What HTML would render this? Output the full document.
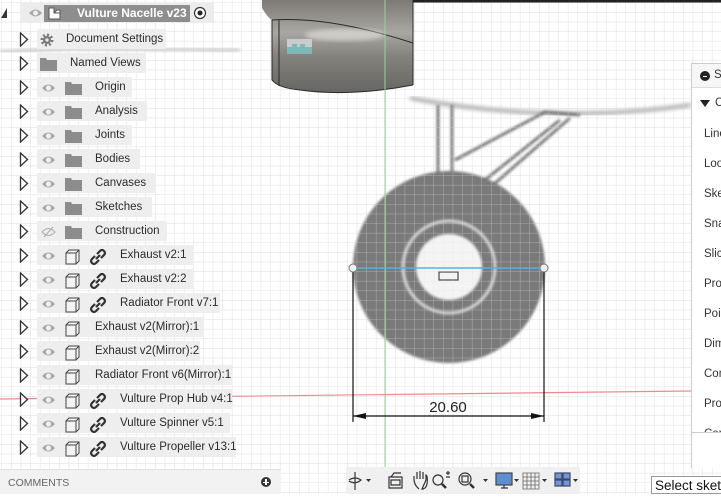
<!DOCTYPE html>
<html><head><meta charset="utf-8"><style>
*{margin:0;padding:0;box-sizing:border-box}
body{width:721px;height:494px;overflow:hidden;position:relative;font-family:"Liberation Sans",sans-serif;background:#fff}
#bg{position:absolute;left:0;top:0}
.row{position:absolute;left:0;height:24px;width:300px}
.tri{position:absolute;left:19px;top:6px}
.box{position:absolute;left:37px;top:3px;height:20px;background:#eeeeee}
.t{position:absolute;top:7px;font-size:11.5px;color:#2b2b2b;white-space:nowrap}
.ic{position:absolute;top:5px}
</style></head><body>
<svg id="bg" width="721" height="494" viewBox="0 0 721 494">
<defs>
<pattern id="g" width="9.6" height="9.6" patternUnits="userSpaceOnUse" x="2" y="3">
<path d="M9.6 0V9.6H0" fill="none" stroke="#e2e2e2" stroke-width="1"/>
</pattern>
<filter id="bl"><feGaussianBlur stdDeviation="1.3"/></filter>
<filter id="bl2"><feGaussianBlur stdDeviation="2"/></filter>
<linearGradient id="ng" x1="0" y1="0" x2="0" y2="1"><stop offset="0" stop-color="#7d7a75"/><stop offset="0.35" stop-color="#a9a7a2"/><stop offset="0.6" stop-color="#85837e"/><stop offset="1" stop-color="#686662"/></linearGradient>
</defs>
<rect width="721" height="494" fill="url(#g)"/>
<path d="M0 52 L80 48 L240 50" stroke="#777" stroke-width="3" fill="none" filter="url(#bl2)" opacity="0.5"/>
<path d="M410 98 Q 550 125 691 105" stroke="#666" stroke-width="3" fill="none" filter="url(#bl2)" opacity="0.7"/>
<g filter="url(#bl)" stroke="#777" fill="none" stroke-width="3">
<path d="M438 105 L438 260"/><path d="M452 105 L452 260"/>
<path d="M455 160 L545 112 L580 115"/><path d="M460 200 L560 120"/><path d="M470 205 L570 118"/>
</g>
<circle cx="449" cy="267" r="96" fill="#7a7a7a" filter="url(#bl)"/>
<circle cx="449" cy="267" r="46" fill="none" stroke="#d8d8d8" stroke-width="3" filter="url(#bl)"/>
<circle cx="449" cy="267" r="33" fill="#f4f4f4" filter="url(#bl)"/>
<path d="M448 200 L448 260" stroke="#bbb" stroke-width="6" filter="url(#bl)"/>
<rect x="439" y="272" width="19" height="8" fill="none" stroke="#555" stroke-width="1.3"/>
<rect width="721" height="494" fill="url(#g)" opacity="0.5"/>
<path d="M240 0 L262 0 L262 8 Q268 18 272 20 L272 80 Q278 88 300 90 Q350 97 413 85 L413 0 Z" fill="url(#ng)"/>
<path d="M272 20 L272 80 Q278 88 300 90 Q350 97 413 85 M279 20 L279 86 M272 20 Q330 16 413 43 M413 0 L413 85" stroke="#2a2a2a" stroke-width="1" fill="none"/>
<ellipse cx="345" cy="35" rx="40" ry="6" fill="#e8e6e2" opacity="0.6" filter="url(#bl2)"/>
<rect x="287" y="39" width="25" height="15" fill="#c8cccc"/><path d="M287 54 V47 H292 V44 H297 V47 H300 V44 H305 V47 H312 V54Z" fill="#7fb8b8"/>
<path d="M413 1 L721 1" stroke="#222" stroke-width="3"/>
<path d="M385 0 V494" stroke="#8fd88f" stroke-width="1"/>
<path d="M0 399 L691 391" stroke="#f08a8a" stroke-width="1.2"/>
<path d="M353 268 H544" stroke="#4fb4e6" stroke-width="1.6"/>
<path d="M353 272 V422 M544 272 V422 M353 416 H544" stroke="#111" stroke-width="1.2"/>
<path d="M353 416 L366 413 L366 419Z M544 416 L531 413 L531 419Z" fill="#111"/>
<circle cx="353" cy="268" r="4" fill="#eee" stroke="#777"/>
<circle cx="544" cy="268" r="4" fill="#eee" stroke="#777"/>
<text x="448" y="412" font-family="Liberation Sans" font-size="15" text-anchor="middle" fill="#222">20.60</text>
</svg>

<div class="row" style="top:0">
<div style="position:absolute;left:20px;top:3px;width:194px;height:20px;background:#ececec"></div>
<svg style="position:absolute;left:0;top:7px" width="8" height="12"><path d="M7 1 V11 H1Z" fill="#333"/></svg>
<svg class="ic" style="left:28px;top:8px" width="15" height="10"><path d="M1 5 Q7.5 -2 14 5 Q7.5 12 1 5Z" fill="#aaa"/><circle cx="7.5" cy="5" r="2.5" fill="#eee"/></svg>
<div style="position:absolute;left:44px;top:5px;width:146px;height:17px;background:#8e8e8e"></div>
<svg class="ic" style="left:47px;top:6px" width="16" height="15"><path d="M2 2 H7 V7 H13 V13 H2Z M7 7 L10 4 H13 V7" fill="#fff" stroke="#555"/></svg>
<div class="t" style="left:77px;top:6px;color:#fff;font-weight:bold;font-size:12px">Vulture Nacelle v23</div>
<svg class="ic" style="left:193px;top:6px" width="14" height="14"><circle cx="7" cy="7" r="5.5" fill="#fff" stroke="#333" stroke-width="1.2"/><circle cx="7" cy="7" r="2.5" fill="#222"/></svg>
</div>

<div id="tree"></div>
<script>
const eye='<svg class="ic" style="left:41px;top:9px" width="15" height="10"><path d="M1 5 Q7.5 -2 14 5 Q7.5 12 1 5Z" fill="#a6a6a6"/><circle cx="7.5" cy="5" r="2.6" fill="#eee"/></svg>';
const eyeoff='<svg class="ic" style="left:41px;top:8px" width="15" height="12"><path d="M1 6 Q7.5 -1 14 6 Q7.5 13 1 6Z" fill="none" stroke="#aaa"/><path d="M3 11 L12 1" stroke="#aaa"/></svg>';
const fold='<svg class="ic" style="left:65px;top:8px" width="17" height="13"><path d="M0 0 H6 L7 2 H17 V13 H0Z" fill="#8c8c8c"/></svg>';
const cube='<svg class="ic" style="left:65px;top:7px" width="16" height="16"><path d="M1 4 L4 1 H14 V12 L11 15 H1Z" fill="#f4f4f4" stroke="#444"/><path d="M1 4 H11 V15 M11 4 L14 1" stroke="#444" fill="none"/></svg>';
const link='<svg class="ic" style="left:89px;top:7px" width="18" height="16"><g fill="none" stroke="#333" stroke-width="2.2"><path d="M8 5 L11 2 Q13 0 15 2 Q17 4 15 6 L12 9"/><path d="M10 11 L7 14 Q5 16 3 14 Q1 12 3 10 L6 7"/><path d="M7 10 L11 6"/></g></svg>';
const gear='<svg class="ic" style="left:40px;top:7px" width="14" height="14"><circle cx="7" cy="7" r="5" fill="none" stroke="#7b7b7b" stroke-width="3" stroke-dasharray="2 1.9"/><circle cx="7" cy="7" r="4" fill="#7b7b7b"/><circle cx="7" cy="7" r="1.6" fill="#eee"/></svg>';
const rows=[
['Document Settings',166,'gear',66],
['Named Views',146,'nv',70],
['Origin',132,'f',95],['Analysis',147,'f',95],['Joints',132,'f',95],['Bodies',140,'f',95],
['Canvases',156,'f',95],['Sketches',152,'f',95],['Construction',167,'fo',95],
['Exhaust v2:1',193,'cl',120],['Exhaust v2:2',193,'cl',120],['Radiator Front v7:1',220,'cl',120],
['Exhaust v2(Mirror):1',204,'c',95],['Exhaust v2(Mirror):2',200,'c',95],['Radiator Front v6(Mirror):1',232,'c',95],
['Vulture Prop Hub v4:1',232,'cl',120],['Vulture Spinner v5:1',230,'cl',120],['Vulture Propeller v13:1',236,'cl',120]];
let h='';
rows.forEach((r,i)=>{
 let y=26+i*24;
 let ic='';
 if(r[2]=='gear')ic=gear;
 else if(r[2]=='nv')ic='<svg class="ic" style="left:40px;top:8px" width="17" height="13"><path d="M0 0 H6 L7 2 H17 V13 H0Z" fill="#8c8c8c"/></svg>';
 else if(r[2]=='f')ic=eye+fold;
 else if(r[2]=='fo')ic=eyeoff+fold;
 else if(r[2]=='cl')ic=eye+cube+link;
 else ic=eye+cube;
 h+=`<div class="row" style="top:${y}px"><svg class="tri" width="10" height="15"><path d="M1.5 1 L8.5 7.5 L1.5 14Z" fill="#fff" stroke="#333" stroke-width="1.3"/></svg><div class="box" style="width:${r[1]-37}px"></div>${ic}<div class="t" style="left:${r[3]}px">${r[0]}</div></div>`;
});
document.getElementById('tree').innerHTML=h;
</script>

<div style="position:absolute;left:691px;top:63px;width:30px;height:405px;background:#fff;border-left:1px solid #ccc;border-top:1px solid #ccc;overflow:hidden;font-size:11.5px;color:#333">
<div style="height:24px;border-bottom:1px solid #ddd;background:#f6f6f6;position:relative"><span style="position:absolute;left:8px;top:7px;width:10px;height:10px;border-radius:50%;background:#222"></span><span style="position:absolute;left:11px;top:11.5px;width:4px;height:1.5px;background:#fff"></span><span style="position:absolute;left:22px;top:5px">S</span></div>
<div style="position:absolute;left:8px;top:36px;width:0;height:0;border-left:5px solid transparent;border-right:5px solid transparent;border-top:7px solid #222"></div>
<div style="position:absolute;left:23px;top:33px">C</div>
<div style="position:absolute;left:12px;top:55px;line-height:30px">Line<br>Loo<br>Ske<br>Sna<br>Slic<br>Pro<br>Poin<br>Dim<br>Con<br>Proj<br>Con</div>
<div style="position:absolute;left:0;top:368px;width:30px;height:40px;background:#fff;border-top:1px solid #ccc"></div>
</div>

<div style="position:absolute;left:0;top:469px;width:281px;height:25px;background:#f2f2f2;border-top:1px solid #e0e0e0">
<span style="position:absolute;left:8px;top:7px;font-size:10.5px;color:#666">COMMENTS</span>
<span style="position:absolute;left:261px;top:7px;width:10px;height:10px;border-radius:50%;background:#333"></span>
<span style="position:absolute;left:263px;top:11.5px;width:6px;height:1.2px;background:#fff"></span>
<span style="position:absolute;left:265.4px;top:9px;width:1.2px;height:6px;background:#fff"></span>
</div>

<div style="position:absolute;left:346px;top:467px;width:234px;height:27px;background:#f0f0f0">
<svg width="234" height="27" viewBox="0 0 234 27">
<g stroke="#333" fill="none" stroke-width="1.2">
<path d="M9 5 V23 M3 13 Q9 9 15 13 Q9 18 3 14"/>
<path d="M43 10 H56 V21 H43Z M45 13 H54 V18 H45Z M45 10 L48 6 H55"/>
<path d="M73 22 Q68 18 68 12 V9 M71 12 V5 M74 12 V4 M77 12 V5 M80 13 V8 Q82 9 81 17 Q80 22 76 22Z"/>
<circle cx="92" cy="13" r="5"/><path d="M96 17 L100 21" stroke-width="2.5"/><path d="M100 6 H104 M102 4 V8 M100 10 H104"/>
<circle cx="119" cy="12" r="6"/><rect x="116" y="9" width="6" height="6"/><path d="M124 17 L128 21" stroke-width="2.5"/>
<rect x="150" y="6" width="16" height="12" fill="#5b8fd4" stroke="#444"/><path d="M155 21 H162 M158 18 V21"/>
<path d="M177 6 H193 V22 H177Z M181 6 V22 M185 6 V22 M189 6 V22 M177 10 H193 M177 14 H193 M177 18 H193" stroke="#666" stroke-width="0.8"/>
<rect x="209" y="6" width="7" height="6" fill="#6a9ad8" stroke="#446"/><rect x="217" y="6" width="7" height="6" fill="#6a9ad8" stroke="#446"/><rect x="209" y="13" width="7" height="6" fill="#6a9ad8" stroke="#446"/><rect x="217" y="13" width="7" height="6" fill="#6a9ad8" stroke="#446"/>
</g>
<g fill="#333"><path d="M20 12 h5 l-2.5 3z M137 12 h5 l-2.5 3z M168 12 h5 l-2.5 3z M196 12 h5 l-2.5 3z M227 12 h5 l-2.5 3z"/></g>
</svg>
</div>

<div style="position:absolute;left:651px;top:476px;width:70px;height:18px;background:#fff;border:1px solid #999;border-right:none;font-size:13.5px;color:#111;padding:1px 0 0 3px;white-space:nowrap;overflow:hidden">Select sketch</div>
</body></html>
